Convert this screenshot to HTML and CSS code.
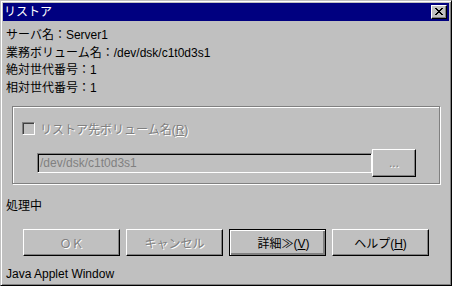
FILE: index.html
```html
<!DOCTYPE html>
<html lang="ja">
<head>
<meta charset="utf-8">
<title>リストア</title>
<link rel="stylesheet" href="styles.css">
</head>
<body>
<div class="window">
  <div class="titlebar">
    <span class="title">リストア</span>
    <button class="close" type="button" aria-label="閉じる">
      <svg width="8" height="7" viewBox="0 0 8 7"><path d="M0 0h2v1h1v1h2v-1h1v-1h2v1h-1v1h-1v1h-1v1h1v1h1v1h1v1h-2v-1h-1v-1h-2v1h-1v1h-2v-1h1v-1h1v-1h1v-1h-1v-1h-1v-1h-1z" fill="#000"/></svg>
    </button>
  </div>
  <div class="content">
    <div class="info">
      <div>サーバ名：Server1</div>
      <div>業務ボリューム名：/dev/dsk/c1t0d3s1</div>
      <div>絶対世代番号：1</div>
      <div>相対世代番号：1</div>
    </div>
    <div class="group">
      <div class="check-row">
        <span class="checkbox"></span>
        <span class="disabled">リストア先ボリューム名(<u>R</u>)</span>
      </div>
      <div class="field-row">
        <div class="field">/dev/dsk/c1t0d3s1</div>
        <div class="btn browse"><span class="disabled">...</span></div>
      </div>
    </div>
    <div class="status">処理中</div>
    <div class="buttons">
      <div class="btn"><span class="disabled">ＯＫ</span></div>
      <div class="btn"><span class="disabled">キャンセル</span></div>
      <div class="btn default"><span>詳細≫(<u>V</u>)</span></div>
      <div class="btn"><span>ヘルプ(<u>H</u>)</span></div>
    </div>
    <div class="applet">Java Applet Window</div>
  </div>
</div>
</body>
</html>
```

FILE: styles.css
```css
html, body {
  margin: 0;
  padding: 0;
  background: #c0c0c0;
}
body {
  font-family: "Liberation Sans", "Noto Sans CJK JP", sans-serif;
  font-size: 12px;
  color: #000;
}
.window {
  box-sizing: border-box;
  width: 452px;
  height: 286px;
  border: 1px solid;
  border-color: #c0c0c0 #000 #000 #c0c0c0;
  box-shadow: inset 1px 1px #fff, inset -1px -1px #808080;
  padding: 2px;
  display: flex;
  flex-direction: column;
  background: #c0c0c0;
}
.titlebar {
  height: 18px;
  background: #000080;
  color: #fff;
  display: flex;
  align-items: center;
  justify-content: space-between;
  padding: 0 2px 0 1px;
  flex: none;
}
.title {
  line-height: 18px;
}
.close {
  box-sizing: border-box;
  width: 16px;
  height: 14px;
  padding: 0;
  margin: 0;
  background: #c0c0c0;
  border: 1px solid;
  border-color: #fff #000 #000 #fff;
  box-shadow: inset -1px -1px #808080;
  display: flex;
  align-items: center;
  justify-content: center;
}
.close svg {
  display: block;
  margin: 0 1px 1px 0;
}
.content {
  flex: 1;
  display: flex;
  flex-direction: column;
  padding: 0 3px;
}
.info {
  margin-top: 6px;
  line-height: 17.5px;
}
.group {
  margin: 9px 6px 0 6px;
  height: 78px;
  box-sizing: border-box;
  border: 1px solid #808080;
  box-shadow: inset 1px 1px #fff, 1px 1px #fff;
  padding: 14px 0 0 9px;
  display: flex;
  flex-direction: column;
}
.check-row {
  display: flex;
  align-items: center;
  height: 15px;
  gap: 5px;
}
.checkbox {
  box-sizing: border-box;
  width: 13px;
  height: 13px;
  border: 1px solid;
  border-color: #808080 #fff #fff #808080;
  box-shadow: inset 1px 1px #404040, inset -1px -1px #c0c0c0;
}
.disabled {
  color: #808080;
  text-shadow: 1px 1px 0 #fff;
}
.field-row {
  margin-top: 13px;
  height: 28px;
  display: flex;
  align-items: center;
  padding-left: 15px;
}
.field {
  box-sizing: border-box;
  width: 335px;
  height: 20px;
  border: 1px solid;
  border-color: #808080 #fff #fff #808080;
  box-shadow: inset 1px 1px #000;
  color: #808080;
  padding: 0 0 0 2px;
  line-height: 18px;
}
.btn {
  box-sizing: border-box;
  border: 1px solid;
  border-color: #fff #000 #000 #fff;
  box-shadow: inset -1px -1px #808080;
  display: flex;
  align-items: center;
  justify-content: center;
  background: #c0c0c0;
}
.browse {
  width: 44px;
  height: 28px;
}
.status {
  margin-top: 14px;
  line-height: 17.5px;
}
.buttons {
  margin-top: 13px;
  padding-left: 17px;
  display: flex;
  gap: 6px;
}
.buttons .btn {
  width: 97px;
  height: 27px;
}
.btn.default {
  border-color: #000;
  box-shadow: inset 1px 1px #fff, inset -2px -2px #808080, inset -1px -1px #000;
}
.btn.default span {
  margin-left: 12px;
}
.applet {
  margin-top: auto;
  line-height: 15px;
  padding-bottom: 1px;
}
```
